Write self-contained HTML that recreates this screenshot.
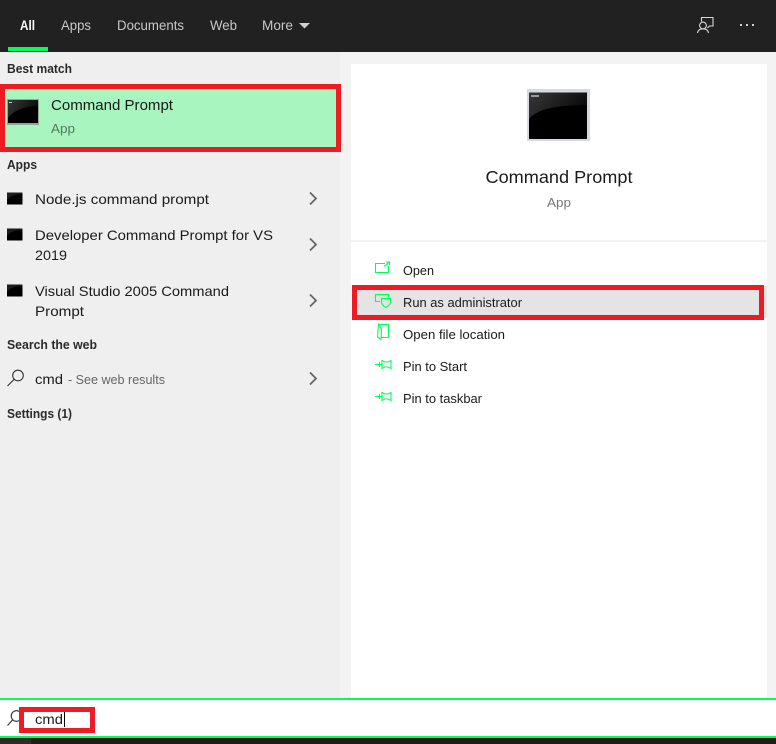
<!DOCTYPE html>
<html>
<head>
<meta charset="utf-8">
<style>
html,body{margin:0;padding:0;width:776px;height:744px;overflow:hidden;background:#fff}
svg{display:block}
text{font-family:"Liberation Sans",sans-serif;font-size:14px;fill:#1a1a1a}
.h{font-size:13px;font-weight:bold;fill:#2a2a2a}
.t{fill:#c8c8c8;font-size:13.5px}
.m{font-size:13px;fill:#1a1a1a}
</style>
</head>
<body>
<svg width="776" height="744" viewBox="0 0 776 744" xmlns="http://www.w3.org/2000/svg">
<defs>
<linearGradient id="g" x1="0" y1="0" x2="1" y2="0.4"><stop offset="0" stop-color="#383838"/><stop offset="1" stop-color="#0a0a0a"/></linearGradient>
</defs>
<!-- backgrounds -->
<rect x="0" y="0" width="776" height="52" fill="#212121"/>
<rect x="0" y="52" width="340" height="646" fill="#efefef"/>
<rect x="340" y="52" width="436" height="646" fill="#f3f3f3"/>
<rect x="351" y="64" width="416" height="176" fill="#fff"/>
<rect x="351" y="242" width="416" height="456" fill="#fff"/>
<!-- tabs -->
<text x="20" y="30" class="t" style="fill:#fff;font-weight:bold" textLength="15" lengthAdjust="spacingAndGlyphs">All</text>
<text x="61" y="30" class="t" textLength="30" lengthAdjust="spacingAndGlyphs">Apps</text>
<text x="117" y="30" class="t" textLength="67" lengthAdjust="spacingAndGlyphs">Documents</text>
<text x="210" y="30" class="t" textLength="27" lengthAdjust="spacingAndGlyphs">Web</text>
<text x="262" y="30" class="t" textLength="31" lengthAdjust="spacingAndGlyphs">More</text>
<path d="M299 23h11l-5.500 5.500z" fill="#d0d0d0"/>
<rect x="8" y="47" width="40" height="4" fill="#00ff55"/>
<!-- feedback icon -->
<g fill="none" stroke="#d8d8d8" stroke-width="1.100">
<path d="M701.500 21.500V17.500H713V26H709.500L707.500 28"/>
<circle cx="703" cy="25.500" r="3.400"/>
<path d="M697.500 33C698 29.800 700 28.800 703 28.800S708 29.800 708.500 33"/>
</g>
<g fill="#d0d0d0"><rect x="740" y="24" width="2" height="2"/><rect x="746" y="24" width="2" height="2"/><rect x="752" y="24" width="2" height="2"/></g>
<!-- left -->
<text x="7" y="73" class="h" textLength="65" lengthAdjust="spacingAndGlyphs">Best match</text>
<rect x="2.500" y="86.500" width="336" height="63" fill="#a8f5c0" stroke="#ed1c24" stroke-width="5"/>
<rect x="7" y="99" width="32" height="26" fill="#8fa898"/>
<rect x="8" y="100" width="30" height="23" fill="#000"/>
<path d="M8 100H38V106C26 106 14 110 8 118Z" fill="url(#g)"/>
<rect x="9" y="102" width="3" height="1" fill="#ccc"/>
<text x="51" y="110" style="font-size:15px" textLength="122" lengthAdjust="spacingAndGlyphs">Command Prompt</text>
<text x="51" y="133" style="font-size:13px;fill:#55785f" textLength="24" lengthAdjust="spacingAndGlyphs">App</text>
<text x="7" y="169" class="h" textLength="30" lengthAdjust="spacingAndGlyphs">Apps</text>
<g>
<path d="M7 192.500H22.500V204.500H7Z" fill="#000"/><path d="M7 192.500H22.500V194C15 194 10 196 7 200Z" fill="#1c1c1c"/>
<path d="M7 228.500H22.500V240.500H7Z" fill="#000"/><path d="M7 228.500H22.500V230C15 230 10 232 7 236Z" fill="#1c1c1c"/>
<path d="M7 284.500H22.500V296.500H7Z" fill="#000"/><path d="M7 284.500H22.500V286C15 286 10 288 7 292Z" fill="#1c1c1c"/>
</g>
<text x="35" y="204" textLength="174" lengthAdjust="spacingAndGlyphs">Node.js command prompt</text>
<text x="35" y="240" textLength="238" lengthAdjust="spacingAndGlyphs">Developer Command Prompt for VS</text>
<text x="35" y="260" textLength="32" lengthAdjust="spacingAndGlyphs">2019</text>
<text x="35" y="296" textLength="194" lengthAdjust="spacingAndGlyphs">Visual Studio 2005 Command</text>
<text x="35" y="316" textLength="49" lengthAdjust="spacingAndGlyphs">Prompt</text>
<text x="7" y="349" class="h" textLength="90" lengthAdjust="spacingAndGlyphs">Search the web</text>
<g fill="none" stroke="#666" stroke-width="1.800">
<path d="M310 192.500L316 198.500L310 204.500"/>
<path d="M310 238.500L316 244.500L310 250.500"/>
<path d="M310 294.500L316 300.500L310 306.500"/>
<path d="M310 372.500L316 378.500L310 384.500"/>
</g>
<g fill="none" stroke="#333" stroke-width="1.100">
<circle cx="18" cy="375.500" r="5.300"/><path d="M14.200 379.300L7.500 386"/>
</g>
<text x="35" y="384" textLength="28" lengthAdjust="spacingAndGlyphs">cmd</text>
<text x="68" y="384" style="font-size:12.500px;fill:#666" textLength="97" lengthAdjust="spacingAndGlyphs">- See web results</text>
<text x="7" y="418" class="h" textLength="65" lengthAdjust="spacingAndGlyphs">Settings (1)</text>
<!-- right preview -->
<rect x="527" y="89" width="63" height="52" fill="#d6dae0"/>
<rect x="529" y="92.500" width="58" height="46.500" fill="#000"/>
<path d="M529 92.500H587V105C565 105 539 107 529 119Z" fill="url(#g)"/>
<rect x="531" y="95" width="8" height="2" fill="#999"/>
<text x="559" y="183" text-anchor="middle" style="font-size:17.500px" textLength="147" lengthAdjust="spacingAndGlyphs">Command Prompt</text>
<text x="559" y="207" text-anchor="middle" style="font-size:13px;fill:#777" textLength="24" lengthAdjust="spacingAndGlyphs">App</text>
<!-- actions -->
<rect x="352" y="286" width="415" height="32" fill="#e4e4e4"/>
<rect x="354.500" y="287.500" width="407" height="30" fill="#e4e4e4" stroke="#ed1c24" stroke-width="5"/>
<text x="403" y="275" class="m" textLength="31" lengthAdjust="spacingAndGlyphs">Open</text>
<text x="403" y="307" class="m" textLength="119" lengthAdjust="spacingAndGlyphs">Run as administrator</text>
<text x="403" y="339" class="m" textLength="102" lengthAdjust="spacingAndGlyphs">Open file location</text>
<text x="403" y="371" class="m" textLength="64" lengthAdjust="spacingAndGlyphs">Pin to Start</text>
<text x="403" y="403" class="m" textLength="79" lengthAdjust="spacingAndGlyphs">Pin to taskbar</text>
<g fill="none" stroke="#00ff55" stroke-width="1.100">
<path d="M388.500 266V272.500H375.500V263.500H385"/><path d="M384 266.500L389.500 262M386 262H389.500V265"/>
<path d="M388.500 297V294.500H375.500V301.500H380"/>
<path d="M381.500 298.500H390.500V302C390.500 304.500 388.500 306 386 307.500C383.500 306 381.500 304.500 381.500 302Z"/>
<path d="M378.500 324.500H388.500V337.500H381.500M378.500 324.500L377.500 337L381 339.500L381.500 329Z"/>
<path d="M375 364.500H382M379.500 362V367M382 360.500L385 362H388L391 360.500V368.500L388 367H385L382 368.500Z"/>
<path d="M375 396.500H382M379.500 394V399M382 392.500L385 394H388L391 392.500V400.500L388 399H385L382 400.500Z"/>
</g>
<!-- search bar -->
<rect x="0" y="698" width="776" height="2" fill="#00ff55"/>
<rect x="0" y="700" width="776" height="36" fill="#fff"/>
<rect x="0" y="736" width="776" height="2" fill="#00ff55"/>
<rect x="0" y="738" width="776" height="6" fill="#1e1e1e"/>
<rect x="0" y="738" width="31" height="6" fill="#2c2c2c"/>
<g fill="none" stroke="#333" stroke-width="1.100">
<circle cx="16.500" cy="716" r="5.300"/><path d="M12.800 719.800L7.500 725.500"/>
</g>
<rect x="21.500" y="709.500" width="71" height="21" fill="#fff" stroke="#ed1c24" stroke-width="5"/>
<text x="35" y="724" textLength="28" lengthAdjust="spacingAndGlyphs">cmd</text>
<rect x="64" y="712" width="1" height="15" fill="#000"/>
</svg>
</body>
</html>
